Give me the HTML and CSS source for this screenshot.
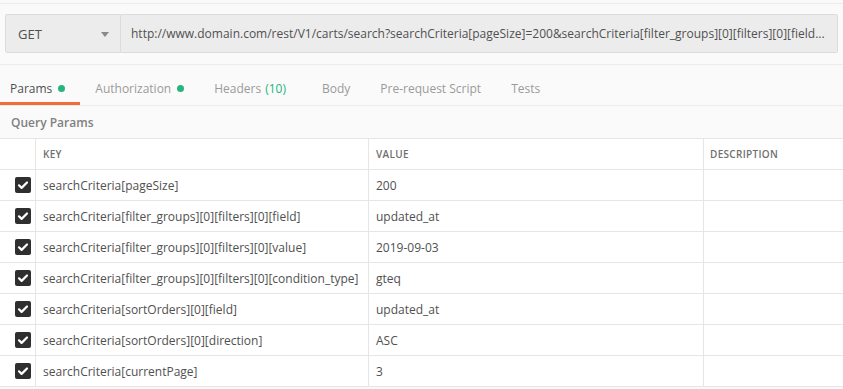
FILE: index.html
```html
<!DOCTYPE html>
<html>
<head>
<meta charset="utf-8">
<link rel="stylesheet" href="styles.css">
</head>
<body>
<div class="app">
  <div class="topline"></div>
  <div class="reqbar">
    <div class="method"><span>GET</span><span class="caret"></span></div>
    <div class="url">http://www.domain.com/rest/V1/carts/search?searchCriteria[pageSize]=200&amp;searchCriteria[filter_groups][0][filters][0][field...</div>
  </div>
  <div class="tabs">
    <div class="tab active">Params<span class="dot"></span></div>
    <div class="tab">Authorization<span class="dot"></span></div>
    <div class="tab tab-headers">Headers <span class="count">(10)</span></div>
    <div class="tab">Body</div>
    <div class="tab">Pre-request Script</div>
    <div class="tab">Tests</div>
  </div>
  <div class="section-title">Query Params</div>
  <div class="table">
    <div class="row head">
      <div class="cell chk"></div>
      <div class="cell key">KEY</div>
      <div class="cell val">VALUE</div>
      <div class="cell desc">DESCRIPTION</div>
    </div>
    <div class="row">
      <div class="cell chk"><span class="box"><svg viewBox="0 0 16 16"><path d="M4 8.3l2.6 2.6L12 5.5"/></svg></span></div>
      <div class="cell key">searchCriteria[pageSize]</div>
      <div class="cell val">200</div>
      <div class="cell desc"></div>
    </div>
    <div class="row">
      <div class="cell chk"><span class="box"><svg viewBox="0 0 16 16"><path d="M4 8.3l2.6 2.6L12 5.5"/></svg></span></div>
      <div class="cell key">searchCriteria[filter_groups][0][filters][0][field]</div>
      <div class="cell val">updated_at</div>
      <div class="cell desc"></div>
    </div>
    <div class="row">
      <div class="cell chk"><span class="box"><svg viewBox="0 0 16 16"><path d="M4 8.3l2.6 2.6L12 5.5"/></svg></span></div>
      <div class="cell key">searchCriteria[filter_groups][0][filters][0][value]</div>
      <div class="cell val">2019-09-03</div>
      <div class="cell desc"></div>
    </div>
    <div class="row">
      <div class="cell chk"><span class="box"><svg viewBox="0 0 16 16"><path d="M4 8.3l2.6 2.6L12 5.5"/></svg></span></div>
      <div class="cell key">searchCriteria[filter_groups][0][filters][0][condition_type]</div>
      <div class="cell val">gteq</div>
      <div class="cell desc"></div>
    </div>
    <div class="row">
      <div class="cell chk"><span class="box"><svg viewBox="0 0 16 16"><path d="M4 8.3l2.6 2.6L12 5.5"/></svg></span></div>
      <div class="cell key">searchCriteria[sortOrders][0][field]</div>
      <div class="cell val">updated_at</div>
      <div class="cell desc"></div>
    </div>
    <div class="row">
      <div class="cell chk"><span class="box"><svg viewBox="0 0 16 16"><path d="M4 8.3l2.6 2.6L12 5.5"/></svg></span></div>
      <div class="cell key">searchCriteria[sortOrders][0][direction]</div>
      <div class="cell val">ASC</div>
      <div class="cell desc"></div>
    </div>
    <div class="row">
      <div class="cell chk"><span class="box"><svg viewBox="0 0 16 16"><path d="M4 8.3l2.6 2.6L12 5.5"/></svg></span></div>
      <div class="cell key">searchCriteria[currentPage]</div>
      <div class="cell val">3</div>
      <div class="cell desc"></div>
    </div>
  </div>
</div>
</body>
</html>
```

FILE: styles.css
```css
* { box-sizing: border-box; }
html, body { margin: 0; padding: 0; background: #fafafa; }
body { font-family: "Open Sans", "DejaVu Sans", sans-serif; font-size: 12px; color: #505050; }
.app { width: 843px; height: 389px; overflow: hidden; }
.topline { height: 4px; border-bottom: 1px solid #ececec; }
.reqbar { display: flex; margin: 10px 5px 0 5px; height: 39px; }
.method { width: 116px; display: flex; align-items: center; justify-content: space-between; padding: 0 11px 0 12px; background: #ececec; border: 1px solid #dcdcdc; border-radius: 2px 0 0 2px; font-size: 13px; color: #505050; }
.caret { width: 0; height: 0; border-left: 4.5px solid transparent; border-right: 4.5px solid transparent; border-top: 5px solid #8a8a8a; margin-top: 1px; }
.url { flex: 1; display: flex; align-items: center; padding-left: 10px; background: #ececec; border: 1px solid #dcdcdc; border-left: 0; border-radius: 0 2px 2px 0; font-size: 12px; color: #505050; white-space: nowrap; overflow: hidden; }
.tabs { display: flex; margin-top: 11px; border-top: 1px solid #ececec; height: 42px; border-bottom: 1px solid #ececec; }
.tab { display: flex; align-items: center; padding: 9px 15px 0 15px; font-size: 12px; color: #9a9a9a; border-bottom: 3px solid transparent; }
.tab:first-child { padding-left: 10px; }
.tab-headers { padding-right: 21px; }
.tab.active { color: #505050; border-bottom-color: #f26b3a; }
.dot { width: 7px; height: 7px; border-radius: 50%; background: #26b47f; margin-left: 6px; }
.count { color: #26b47f; margin-left: 4px; }
.section-title { height: 32px; display: flex; align-items: center; padding-left: 11px; font-size: 12px; font-weight: 600; color: #808080; }
.table { background: #fff; border-top: 1px solid #e6e6e6; }
.row { display: flex; height: 31px; border-bottom: 1px solid #e6e6e6; }
.cell { display: flex; align-items: center; padding-left: 7px; border-right: 1px solid #e6e6e6; white-space: nowrap; overflow: hidden; }
.chk { width: 36px; padding-left: 15px; }
.key { width: 333px; }
.val { width: 335px; }
.desc { flex: 1; border-right: 0; padding-left: 6px; }
.head .cell { font-size: 10px; font-weight: 600; color: #707070; letter-spacing: 0.3px; }
.box { width: 16px; height: 16px; border-radius: 2px; background: #2f2f2f; display: flex; }
.box svg { width: 16px; height: 16px; }
.box path { fill: none; stroke: #fff; stroke-width: 2.2; stroke-linecap: round; stroke-linejoin: round; }
```
